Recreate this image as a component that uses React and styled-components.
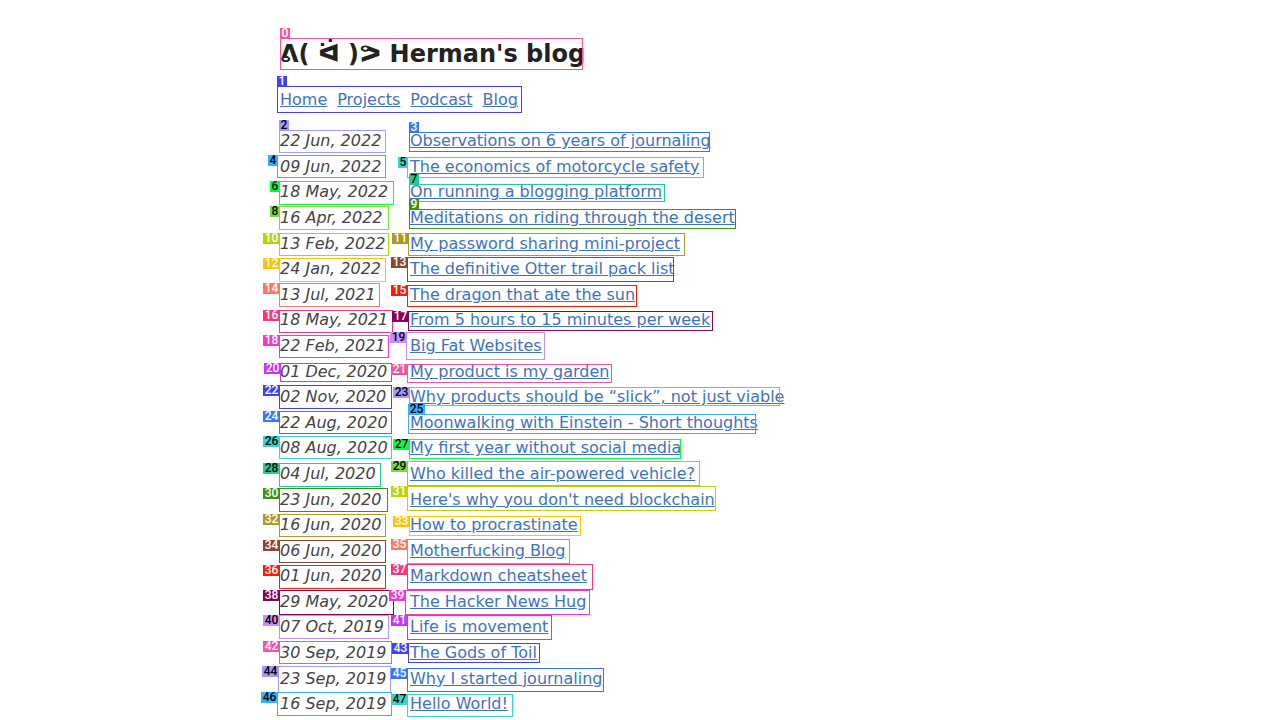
import React from "react";
import styled, { createGlobalStyle } from "styled-components";

const GlobalStyle = createGlobalStyle`
  body {
    margin: 0;
    background: #ffffff;
    color: #444444;
    font-family: "DejaVu Sans", Verdana, sans-serif;
    font-size: 16px;
    line-height: 1.6;
  }
`;

const Page = styled.div`
  position: relative;
  max-width: 720px;
  margin: 0 auto;
  padding-top: 39px;
`;

const Title = styled.h1`
  margin: 0 0 17px;
  color: #222222;
  font-size: 24px;
  line-height: 1.3;
`;

const Nav = styled.nav`
  display: flex;
  gap: 10px;
  margin-bottom: 15px;
  line-height: 26px;
`;

const Link = styled.a`
  color: #3f72c0;
  text-decoration: underline;
`;

const PostList = styled.ul`
  margin: 0;
  padding: 0;
  list-style: none;
`;

const Post = styled.li`
  display: flex;
`;

const PostDate = styled.time`
  flex: 0 0 130px;
  font-style: italic;
`;

const MarkLayer = styled.div`
  position: absolute;
  top: 0;
  left: 0;
  pointer-events: none;
`;

const Mark = styled.div`
  position: absolute;
  box-sizing: border-box;
  left: ${(p) => p.$x}px;
  top: ${(p) => p.$y}px;
  width: ${(p) => p.$w}px;
  height: ${(p) => p.$h}px;
  border: 1px solid ${(p) => p.$color};
`;

const MarkTag = styled.span`
  position: absolute;
  box-sizing: border-box;
  top: ${(p) => (p.$above ? "-11px" : "-1px")};
  ${(p) => (p.$above ? "left: -1px;" : "right: 100%;")}
  width: ${(p) => (p.$wide ? 17 : 10)}px;
  height: 11px;
  background: ${(p) => p.$color};
  color: ${(p) => p.$ink};
  font-family: Roboto, "Liberation Sans", sans-serif;
  font-size: 12px;
  font-weight: 500;
  line-height: 11px;
  text-align: center;
`;

const navLinks = ["Home", "Projects", "Podcast", "Blog"];

const posts = [
  ["22 Jun, 2022", "Observations on 6 years of journaling"],
  ["09 Jun, 2022", "The economics of motorcycle safety"],
  ["18 May, 2022", "On running a blogging platform"],
  ["16 Apr, 2022", "Meditations on riding through the desert"],
  ["13 Feb, 2022", "My password sharing mini-project"],
  ["24 Jan, 2022", "The definitive Otter trail pack list"],
  ["13 Jul, 2021", "The dragon that ate the sun"],
  ["18 May, 2021", "From 5 hours to 15 minutes per week"],
  ["22 Feb, 2021", "Big Fat Websites"],
  ["01 Dec, 2020", "My product is my garden"],
  ["02 Nov, 2020", "Why products should be “slick”, not just viable"],
  ["22 Aug, 2020", "Moonwalking with Einstein - Short thoughts"],
  ["08 Aug, 2020", "My first year without social media"],
  ["04 Jul, 2020", "Who killed the air-powered vehicle?"],
  ["23 Jun, 2020", "Here's why you don't need blockchain"],
  ["16 Jun, 2020", "How to procrastinate"],
  ["06 Jun, 2020", "Motherfucking Blog"],
  ["01 Jun, 2020", "Markdown cheatsheet"],
  ["29 May, 2020", "The Hacker News Hug"],
  ["07 Oct, 2019", "Life is movement"],
  ["30 Sep, 2019", "The Gods of Toil"],
  ["23 Sep, 2019", "Why I started journaling"],
  ["16 Sep, 2019", "Hello World!"],
];

// The mark colours repeat after the last entry; each has its ink colour.
const palette = [
  ["#ff50a0", "#fff"], ["#4040ff", "#fff"], ["#a099ff", "#000"],
  ["#3377ff", "#fff"], ["#33b1ff", "#000"], ["#33d6cc", "#000"],
  ["#00ff40", "#000"], ["#19d193", "#000"], ["#7bdc32", "#000"],
  ["#3a9414", "#fff"], ["#b9d400", "#fff"], ["#aa9a2a", "#fff"],
  ["#ffc400", "#fff"], ["#914335", "#fff"], ["#ff7566", "#fff"],
  ["#ff1a00", "#fff"], ["#ff3380", "#fff"], ["#8c0055", "#fff"],
  ["#ff33cc", "#fff"], ["#c38fff", "#000"], ["#c733ff", "#fff"],
];

// Left, top, right and bottom of each mark, measured from the column's corner.
const marks = [
  [0, 38, 303, 70], [-3, 86, 242, 113],
  [-1, 130, 106, 153], [129, 132, 430, 152],
  [-3, 155, 106, 178], [127, 157, 424, 178],
  [-1, 181, 114, 205], [129, 184, 385, 202],
  [-1, 206, 109, 230], [129, 209, 456, 229],
  [-1, 233, 109, 256], [128, 233, 405, 256],
  [-1, 258, 106, 282], [127, 257, 394, 282],
  [-1, 283, 100, 307], [127, 285, 357, 307],
  [-1, 310, 113, 333], [128, 311, 433, 331],
  [-1, 335, 109, 358], [126, 332, 265, 360],
  [0, 363, 112, 382], [127, 364, 332, 383],
  [-1, 385, 112, 409], [129, 387, 500, 406],
  [-1, 411, 112, 434], [128, 414, 476, 434],
  [-1, 436, 112, 459], [129, 439, 401, 459],
  [-1, 463, 101, 487], [127, 461, 420, 486],
  [-1, 488, 108, 512], [127, 486, 436, 511],
  [-1, 514, 106, 537], [129, 516, 301, 536],
  [-1, 540, 106, 563], [127, 539, 290, 564],
  [-1, 565, 106, 589], [127, 564, 313, 590],
  [-1, 590, 114, 615], [125, 590, 310, 615],
  [-1, 615, 109, 639], [127, 615, 272, 640],
  [-1, 641, 112, 664], [128, 643, 260, 663],
  [-2, 666, 111, 693], [127, 668, 324, 692],
  [-3, 692, 112, 716], [127, 694, 233, 717],
];

const tagsAbove = new Set([0, 1, 2, 3, 7, 9, 25]);

export default function App() {
  return (
    <>
      <GlobalStyle />
      <Page>
        <header>
          <Title>ᕕ( ᐛ )ᕗ Herman's blog</Title>
          <Nav>
            {navLinks.map((name) => (
              <Link key={name} href="#">{name}</Link>
            ))}
          </Nav>
        </header>
        <main>
          <PostList>
            {posts.map(([date, title]) => (
              <Post key={date}>
                <PostDate>{date}</PostDate>
                <Link href="#">{title}</Link>
              </Post>
            ))}
          </PostList>
        </main>
        <MarkLayer>
          {marks.map(([left, top, right, bottom], i) => {
            const [color, ink] = palette[i % palette.length];
            return (
              <Mark key={i} $x={left} $y={top} $w={right - left} $h={bottom - top} $color={color}>
                <MarkTag $above={tagsAbove.has(i)} $wide={i > 9} $color={color} $ink={ink}>
                  {i}
                </MarkTag>
              </Mark>
            );
          })}
        </MarkLayer>
      </Page>
    </>
  );
}
